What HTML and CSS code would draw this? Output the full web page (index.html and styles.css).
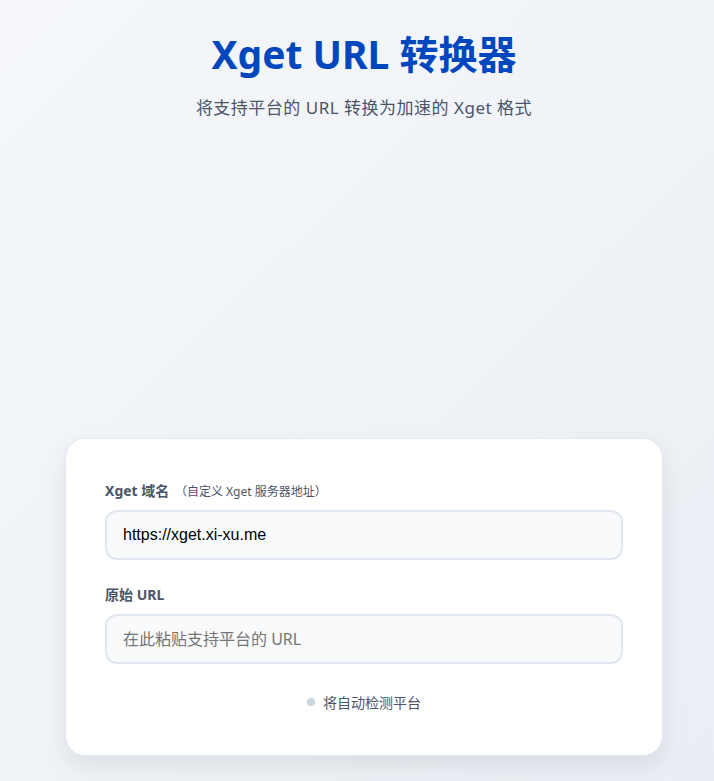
FILE: index.html
```html
<!DOCTYPE html>
<html lang="zh-CN">
<head>
    <meta charset="UTF-8">
    <meta name="viewport" content="width=device-width, initial-scale=1.0">
    <title>Xget URL 转换器</title>
    <link rel="stylesheet" href="styles.css">
</head>
<body>

<div class="container">
    <header class="header">
        <h1 class="title">Xget URL 转换器</h1>
        <p class="subtitle">将支持平台的 URL 转换为加速的 Xget 格式</p>
    </header>

    <div class="card">
        <div class="field">
            <label class="label" for="domain">Xget 域名 <span class="hint">（自定义 Xget 服务器地址）</span></label>
            <input class="input input-value" type="text" id="domain" value="https://xget.xi-xu.me">
        </div>

        <div class="field">
            <label class="label" for="url">原始 URL</label>
            <input class="input" type="text" id="url" placeholder="在此粘贴支持平台的 URL">
        </div>

        <div class="status">
            <span class="dot"></span>
            <span class="status-text">将自动检测平台</span>
        </div>
    </div>
</div>

</body>
</html>
```

FILE: styles.css
```css
* {
    box-sizing: border-box;
}

body {
    margin: 0;
    padding-left: 14px;
    min-height: 100vh;
    background: linear-gradient(135deg, #f5f7fa 0%, #eaeef4 100%);
    font-family: "Noto Sans", "Noto Sans CJK SC", sans-serif;
    color: #2d3748;
}

.container {
    max-width: 598px;
    margin: 0 auto;
    padding-top: 31px;
}

.header {
    text-align: center;
    margin-bottom: 319px;
}

.title {
    margin: 0;
    font-size: 39px;
    line-height: 1.2;
    font-weight: 700;
    color: #0047bd;
}

.subtitle {
    margin: 16px 0 0;
    font-size: 17px;
    letter-spacing: 0.5px;
    color: #4a5568;
}

.card {
    background-color: white;
    border: 1px solid #e2e8f0;
    border-radius: 20px;
    padding: 41px 39px 43px;
    box-shadow: 0 10px 25px rgba(0, 0, 0, 0.08);
}

.field {
    margin-bottom: 24px;
}

.label {
    display: block;
    margin-bottom: 10px;
    font-size: 14px;
    font-weight: 700;
    color: #4a5568;
}

.hint {
    font-size: 12px;
    font-weight: 400;
    color: #4a5568;
    margin-left: 2px;
}

.input {
    display: block;
    width: 100%;
    height: 50px;
    padding: 0 16px;
    border: 2px solid #e2e8f0;
    border-radius: 12px;
    background-color: #f8fafc;
    font-family: "Noto Sans", "Noto Sans CJK SC", sans-serif;
    font-size: 16px;
    color: #000;
    outline: none;
}

.input-value {
    font-family: "Liberation Sans", Arial, sans-serif;
}

.input::placeholder {
    color: #757575;
}

.status {
    display: flex;
    align-items: center;
    justify-content: center;
    gap: 8px;
    margin-top: 28px;
    font-size: 14px;
    color: #4a5568;
}

.dot {
    width: 8px;
    height: 8px;
    border-radius: 50%;
    background-color: #cbd5e0;
}
```
